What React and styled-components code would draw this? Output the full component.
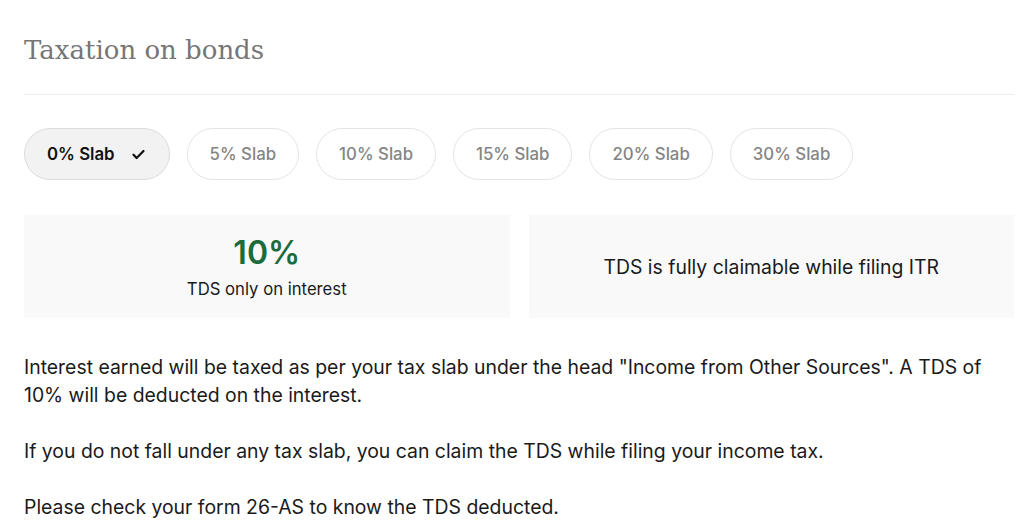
import React, { useState } from "react";
import styled, { createGlobalStyle } from "styled-components";

const GlobalStyle = createGlobalStyle`
  * { box-sizing: border-box; }
  body {
    margin: 0;
    background: #ffffff;
    font-family: Inter, "Noto Sans", sans-serif;
    color: #1a1a1a;
  }
`;

const slabs = ["0%", "5%", "10%", "15%", "20%", "30%"];

const App = () => {
  const [active, setActive] = useState("0%");

  return (
    <Page>
      <GlobalStyle />
      <Title>Taxation on bonds</Title>
      <Divider />
      <ChipRow>
        {slabs.map((s) => (
          <Chip key={s} $active={active === s} onClick={() => setActive(s)}>
            {s} Slab
            {active === s && (
              <svg width="15" height="15" viewBox="0 0 24 24" fill="none">
                <path
                  d="M4 12.5l5 5L20 6.5"
                  stroke="#111"
                  strokeWidth="3.6"
                  strokeLinecap="round"
                  strokeLinejoin="round"
                />
              </svg>
            )}
          </Chip>
        ))}
      </ChipRow>
      <Cards>
        <Card>
          <Rate>10%</Rate>
          <CardNote>TDS only on interest</CardNote>
        </Card>
        <Card>
          <CardText>TDS is fully claimable while filing ITR</CardText>
        </Card>
      </Cards>
      <Body>
        <p>
          Interest earned will be taxed as per your tax slab under the head
          "Income from Other Sources". A TDS of 10% will be deducted on the
          interest.
        </p>
        <p>
          If you do not fall under any tax slab, you can claim the TDS while
          filing your income tax.
        </p>
        <p>Please check your form 26-AS to know the TDS deducted.</p>
      </Body>
    </Page>
  );
};

const Page = styled.div`
  padding: 30px 10px 0 24px;
`;

const Title = styled.h2`
  margin: 0;
  font-family: "DejaVu Serif", "Liberation Serif", serif;
  font-weight: 400;
  font-size: 26px;
  line-height: 40px;
  color: #767676;
`;

const Divider = styled.div`
  height: 1px;
  background: #ececec;
  margin: 24px 0 33px;
`;

const ChipRow = styled.div`
  display: flex;
  gap: 17px;
`;

const Chip = styled.button`
  display: flex;
  align-items: center;
  gap: 16px;
  height: 52px;
  padding: ${(p) => (p.$active ? "0 23px 0 22px" : "0 22px")};
  border-radius: 26px;
  border: 1px solid ${(p) => (p.$active ? "#dcdcdc" : "#e4e4e4")};
  background: ${(p) => (p.$active ? "#f2f2f2" : "#ffffff")};
  color: ${(p) => (p.$active ? "#111111" : "#858585")};
  font-family: Inter, sans-serif;
  font-size: 16.8px;
  font-weight: ${(p) => (p.$active ? 600 : 500)};
  cursor: pointer;
`;

const Cards = styled.div`
  display: grid;
  grid-template-columns: 1fr 1fr;
  gap: 19px;
  margin-top: 35px;
`;

const Card = styled.div`
  height: 103px;
  background: #f9f9f9;
  display: flex;
  flex-direction: column;
  align-items: center;
  justify-content: center;
  gap: 4px;
`;

const Rate = styled.div`
  font-size: 32px;
  font-weight: 600;
  line-height: 40px;
  color: #1c6b3a;
`;

const CardNote = styled.div`
  font-size: 16.7px;
  line-height: 24px;
  color: #1a1a1a;
`;

const CardText = styled.div`
  font-size: 19.4px;
  line-height: 28px;
  color: #1a1a1a;
`;

const Body = styled.div`
  margin-top: 35px;
  font-size: 19.4px;
  line-height: 28px;
  color: #1a1a1a;
  p {
    margin: 0 0 28px;
  }
`;

export default App;
